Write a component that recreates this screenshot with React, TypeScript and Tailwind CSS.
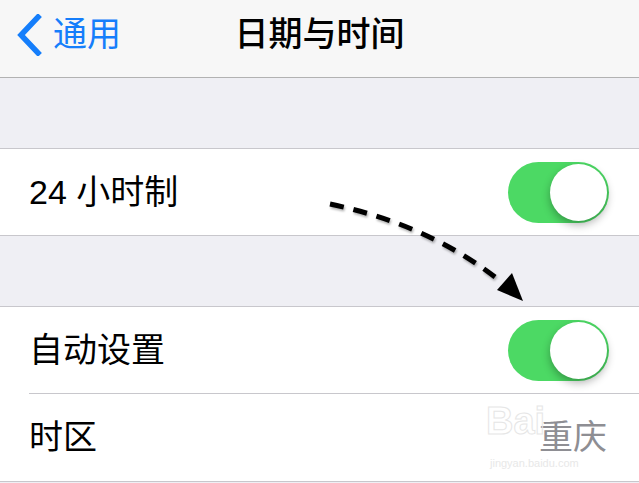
import React from "react";

const font = "font-['Liberation_Sans','Noto_Sans_CJK_SC',sans-serif]";

const Toggle = () => (
  <div className="relative w-[101px] h-[61px] rounded-full bg-[#4cd964]">
    <div className="absolute right-[2px] top-[2px] w-[57px] h-[57px] rounded-full bg-white shadow-[0_4px_8px_rgba(0,0,0,0.3)]" />
  </div>
);

export default function App() {
  return (
    <div className={`relative w-[639px] h-[483px] overflow-hidden bg-[#efeff4] ${font}`}>
      {/* Nav bar */}
      <div className="relative flex items-center h-[78px] bg-[#f7f7f7] border-b border-[#b2b2b2] pb-[8px]">
        <div className="flex items-center pl-[15px] gap-[10px] text-[#157efb] text-[34px]">
          <svg width="28" height="42" viewBox="0 0 28 42">
            <path d="M23 3 L6 21 L23 39" fill="none" stroke="#157efb" strokeWidth="5.5" strokeLinecap="square" />
          </svg>
          <span>通用</span>
        </div>
        <div className="absolute left-0 right-0 top-0 bottom-[8px] flex items-center justify-center text-[34px] text-black font-medium">
          日期与时间
        </div>
      </div>

      <div className="h-[70px]" />

      {/* 24 hours */}
      <div className="flex items-center justify-between h-[88px] bg-white border-y border-[#c8c7cc] pl-[29px] pr-[30px]">
        <span className="text-[34px] text-black">24 小时制</span>
        <Toggle />
      </div>

      <div className="h-[70px]" />

      {/* Auto + timezone */}
      <div className="bg-white border-y border-[#c8c7cc]">
        <div className="flex items-center justify-between h-[86px] pl-[29px] pr-[30px]">
          <span className="text-[34px] text-black">自动设置</span>
          <Toggle />
        </div>
        <div className="ml-[29px] border-t border-[#c8c7cc]" />
        <div className="flex items-center justify-between h-[87px] pl-[29px] pr-[32px]">
          <span className="text-[34px] text-black">时区</span>
          <span className="text-[34px] text-[#8e8e93]">重庆</span>
        </div>
      </div>

      {/* watermark */}
      <div className="absolute left-[486px] top-[402px] text-[38px] leading-none font-bold text-transparent [-webkit-text-stroke:1px_#e6e6e6]">
        Bai
      </div>
      <div className="absolute left-[490px] top-[458px] text-[11px] leading-none text-[#e8e8e8]">
        jingyan.baidu.com
      </div>

      {/* Dashed arrow */}
      <svg className="absolute left-0 top-0" width="639" height="483" viewBox="0 0 639 483">
        <path
          d="M330 204 Q 430 225 500 281"
          fill="none"
          stroke="#000"
          strokeWidth="5"
          strokeDasharray="14 10"
          style={{ filter: "drop-shadow(1px 2px 1px rgba(0,0,0,0.3))" }}
        />
        <polygon points="523,301 497,290 512,273" fill="#000" />
      </svg>
    </div>
  );
}
